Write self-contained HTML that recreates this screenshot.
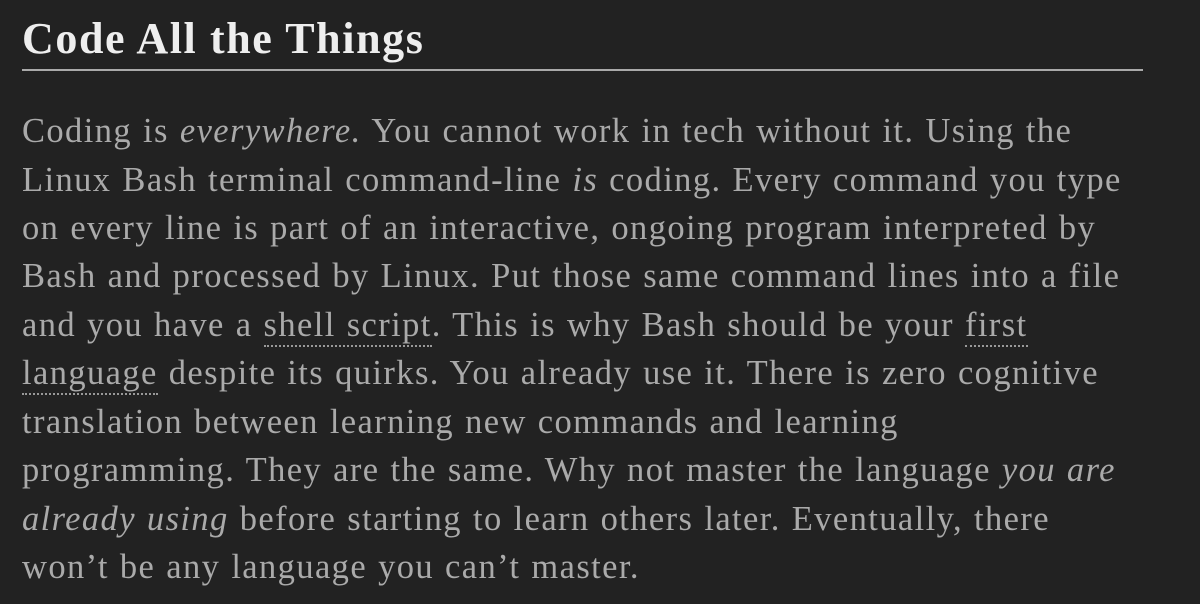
<!DOCTYPE html>
<html><head><meta charset="utf-8"><style>
html,body{margin:0;padding:0;background:#222;width:1200px;height:604px;overflow:hidden}
h1{position:absolute;left:22px;top:13px;margin:0;font:bold 44px/52px "Liberation Serif",serif;color:#eee;letter-spacing:1.6px}
.rule{position:absolute;left:22px;top:69px;width:1121px;height:2px;background:#aaa}
.l{position:absolute;left:22px;font:34.5px/40px "Liberation Serif",serif;color:#aaa;white-space:nowrap;letter-spacing:1.4px;word-spacing:1px}
.d{border-bottom:2px dotted #999;padding-bottom:1px}
</style></head><body>
<h1>Code All the Things</h1>
<div class="rule"></div>
<div class="l" style="top:111px">Coding is <i>everywhere.</i> You cannot work in tech without it. Using the</div>
<div class="l" style="top:160px">Linux Bash terminal command-line <i>is</i> coding. Every command you type</div>
<div class="l" style="top:208px">on every line is part of an interactive, ongoing program interpreted by</div>
<div class="l" style="top:256px">Bash and processed by Linux. Put those same command lines into a file</div>
<div class="l" style="top:305px">and you have a <span class="d">shell script</span>. This is why Bash should be your <span class="d">first</span></div>
<div class="l" style="top:353px"><span class="d">language</span> despite its quirks. You already use it. There is zero cognitive</div>
<div class="l" style="top:402px">translation between learning new commands and learning</div>
<div class="l" style="top:450px">programming. They are the same. Why not master the language <i>you are</i></div>
<div class="l" style="top:499px"><i>already using</i> before starting to learn others later. Eventually, there</div>
<div class="l" style="top:547px">won’t be any language you can’t master.</div>
</body></html>
